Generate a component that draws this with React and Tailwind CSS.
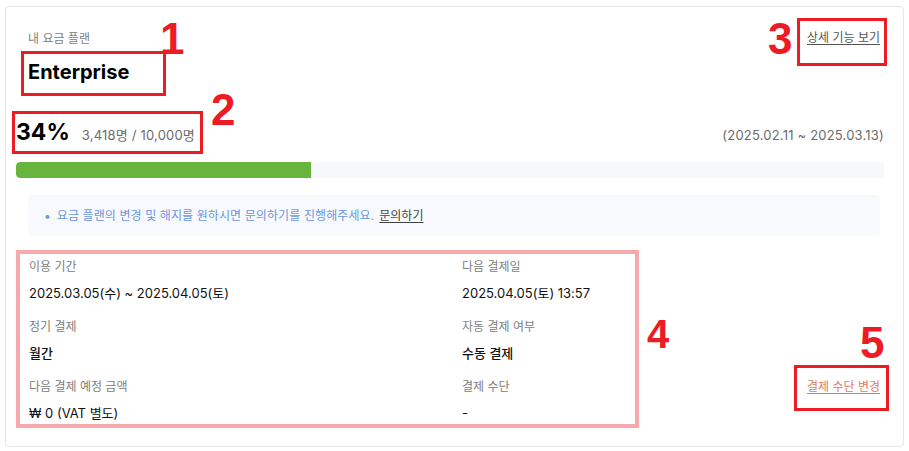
export default function App() {
  const details = [
    { label: '이용 기간', value: '2025.03.05(수) ~ 2025.04.05(토)' },
    { label: '다음 결제일', value: '2025.04.05(토) 13:57' },
    { label: '정기 결제', value: '월간', strong: true },
    { label: '자동 결제 여부', value: '수동 결제', strong: true },
    { label: '다음 결제 예정 금액', value: '₩ 0 (VAT 별도)' },
    { label: '결제 수단', value: '-' },
  ]

  return (
    <div className="relative w-[909px] h-[451px] bg-white pl-[5px] pt-[6px] font-['Inter','Noto_Sans_CJK_KR',sans-serif]">
      {/* Card */}
      <div className="w-[899px] h-[441px] border border-[#e6e6e6] rounded-[4px] pt-[24px] pl-[10px] pr-[19px]">
        {/* Header */}
        <div className="flex justify-between items-start pl-[12px]">
          <div>
            <div className="text-[12px] leading-4 text-[#808080]">내 요금 플랜</div>
            <div className="mt-[11px] text-[20px] leading-7 font-bold text-black">Enterprise</div>
          </div>
          <a className="mt-[-1px] mr-[4px] text-[12px] leading-4 text-[#555] underline underline-offset-2">상세 기능 보기</a>
        </div>

        {/* Usage */}
        <div className="mt-[30px] flex justify-between items-baseline">
          <div className="flex items-baseline gap-[12px]">
            <span className="text-[23px] leading-8 font-bold text-black">34%</span>
            <span className="text-[13px] tracking-[0.2px] text-[#6b6b6b]">3,418명 / 10,000명</span>
          </div>
          <span className="text-[13px] tracking-[0.2px] text-[#6b6b6b]">(2025.02.11 ~ 2025.03.13)</span>
        </div>

        {/* Progress */}
        <div className="mt-[14px] h-4 rounded-[4px] bg-[#f7f8fa] overflow-hidden">
          <div className="h-full bg-[#67b53c] rounded-l-[4px]" style={{ width: '34%' }} />
        </div>

        {/* Notice */}
        <div className="mt-[17px] ml-[12px] mr-[4px] h-[41px] rounded-[4px] bg-[#f7f9fd] flex items-center pl-[16px] text-[12px]">
          <span className="text-[#6a97e0] mr-[6px]">•</span>
          <span className="text-[#6a97e0] tracking-[0.1px]">요금 플랜의 변경 및 해지를 원하시면 문의하기를 진행해주세요.</span>
          <a className="ml-[5px] text-[#444] underline underline-offset-2">문의하기</a>
        </div>

        {/* Details */}
        <div className="mt-[23px] flex justify-between items-start pl-[13px]">
          <div className="grid grid-cols-[433px_170px] gap-y-[16px]">
            {details.map((d) => (
              <div key={d.label}>
                <div className="text-[12px] leading-4 text-[#808080]">{d.label}</div>
                <div className={`mt-[8px] text-[13px] leading-5 text-[#111] ${d.strong ? 'font-medium' : 'font-normal'}`}>{d.value}</div>
              </div>
            ))}
          </div>
          <a className="mt-[120px] mr-[4px] text-[12px] leading-4 text-[#e07a62] underline underline-offset-2">결제 수단 변경</a>
        </div>
      </div>

      {/* Annotations */}
      <div className="absolute left-[21px] top-[51px] w-[145px] h-[45px] border-[3px] border-[#ed1c24]" />
      <div className="absolute left-[12px] top-[111px] w-[191px] h-[43px] border-[3px] border-[#ed1c24]" />
      <div className="absolute left-[797px] top-[18px] w-[90px] h-[48px] border-[3px] border-[#ed1c24]" />
      <div className="absolute left-[16px] top-[250px] w-[623px] h-[178px] border-[4px] border-[#f6aaae]" />
      <div className="absolute left-[794px] top-[365px] w-[95px] h-[46px] border-[3px] border-[#ed1c24]" />

      <span className="absolute left-[160px] top-[17px] text-[44px] leading-none font-bold text-[#ed1c24] font-['Liberation_Sans',sans-serif]">1</span>
      <span className="absolute left-[211px] top-[88px] text-[44px] leading-none font-bold text-[#ed1c24] font-['Liberation_Sans',sans-serif]">2</span>
      <span className="absolute left-[768px] top-[17px] text-[44px] leading-none font-bold text-[#ed1c24] font-['Liberation_Sans',sans-serif]">3</span>
      <span className="absolute left-[647px] top-[314px] text-[40px] leading-none font-bold text-[#ed1c24] font-['Liberation_Sans',sans-serif]">4</span>
      <span className="absolute left-[860px] top-[321px] text-[44px] leading-none font-bold text-[#ed1c24] font-['Liberation_Sans',sans-serif]">5</span>
    </div>
  )
}
